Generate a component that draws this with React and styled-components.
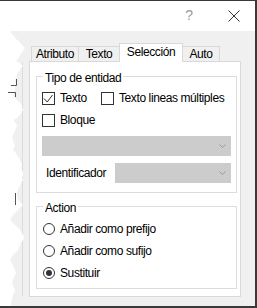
import React from 'react';
import styled, { createGlobalStyle } from 'styled-components';

const GlobalStyle = createGlobalStyle`
  html, body {
    margin: 0;
    padding: 0;
    background: #fff;
  }
  body {
    font-family: "Liberation Sans", Arial, sans-serif;
    font-size: 12px;
    letter-spacing: -0.4px;
    color: #000;
  }
  * {
    box-sizing: border-box;
  }
`;

const Frame = styled.div`
  position: relative;
  width: 257px;
  height: 308px;
  display: flex;
  flex-direction: column;
  border-top: 1px solid #3a3a3a;
  border-right: 2px solid #3a3a3a;
  border-bottom: 2px solid #3a3a3a;
  background: #fff;
  overflow: hidden;
`;

const TitleBar = styled.div`
  height: 30px;
  flex-shrink: 0;
  display: flex;
  justify-content: flex-end;
  align-items: flex-start;
  gap: 35px;
  padding: 7px 15px 0 0;
  background: #fff;
`;

const Help = styled.span`
  font-size: 14px;
  line-height: 14px;
  color: #9a9a9a;
  letter-spacing: 0;
`;

const CloseIcon = styled.svg`
  margin-top: 2px;
`;

const Body = styled.div`
  flex: 1;
  background: #f0f0f0;
  padding: 12px 0 0 29px;
`;

const TabStrip = styled.div`
  display: flex;
  align-items: flex-end;
  height: 18px;
  padding-left: 2px;
`;

const Tab = styled.div`
  width: ${(p) => p.$w}px;
  height: ${(p) => (p.$active ? 19 : 15)}px;
  margin-left: -1px;
  margin-bottom: ${(p) => (p.$active ? -1 : 0)}px;
  padding-top: ${(p) => (p.$active ? 1 : 0)}px;
  border: 1px solid #d9d9d9;
  border-bottom: none;
  background: ${(p) => (p.$active ? '#fff' : '#f0f0f0')};
  position: relative;
  z-index: ${(p) => (p.$active ? 1 : 0)};
  text-align: center;
  line-height: 14px;
  white-space: nowrap;

  &:first-child {
    margin-left: 0;
  }
`;

const Panel = styled.div`
  width: 212px;
  height: 236px;
  border: 1px solid #d9d9d9;
  background: #fff;
  padding: 14px 0 0 6px;
`;

const GroupBox = styled.div`
  position: relative;
  width: 201px;
  height: ${(p) => p.$h}px;
  margin-bottom: 13px;
  border: 1px solid #dcdcdc;
  padding: 15px 0 0 ${(p) => p.$pl}px;
  display: flex;
  flex-direction: column;
  gap: ${(p) => p.$gap}px;
`;

const Legend = styled.span`
  position: absolute;
  top: -6px;
  left: 6px;
  padding: 0 2px;
  background: #fff;
  line-height: 14px;
`;

const CheckGrid = styled.div`
  display: grid;
  grid-template-columns: 59px auto;
  align-items: center;
  height: 13px;
`;

const CheckItem = styled.label`
  display: flex;
  align-items: center;
  gap: 5px;
  line-height: 13px;
  white-space: nowrap;
`;

const Box = styled.span`
  width: 13px;
  height: 13px;
  flex-shrink: 0;
  border: 1px solid #333;
  background: #fff;
  display: flex;
`;

const Combo = styled.div`
  width: ${(p) => p.$w}px;
  height: 20px;
  background: #cccccc;
  border: 1px solid #cccccc;
  display: flex;
  justify-content: flex-end;
  align-items: center;
  padding-right: 4px;
`;

const IdRow = styled.div`
  width: 189px;
  height: 20px;
  margin-top: -2px;
  display: flex;
  align-items: center;
  justify-content: space-between;
  padding-left: 4px;
`;

const RadioItem = styled.label`
  display: flex;
  align-items: center;
  gap: 5px;
  height: 14px;
  line-height: 14px;
  white-space: nowrap;
`;

const Radio = styled.span`
  width: 12px;
  height: 12px;
  flex-shrink: 0;
  border: 1px solid #333;
  border-radius: 50%;
  background: #fff;
  display: flex;
  align-items: center;
  justify-content: center;
`;

const Dot = styled.span`
  width: 6px;
  height: 6px;
  border-radius: 50%;
  background: #333;
`;

const TornEdge = styled.svg`
  position: absolute;
  left: 0;
  top: -1px;
  pointer-events: none;
`;

const tornPoints =
  '0,0 18,0 18,2 12,31 10,32 12,34 14,36 16,39 19,41 21,44 23,46 25,48 23,51 21,54 19,57 17,60 15,60 18,62 21,64 23,66 21,68 20,70 18,72 17,75 16,78 15,80 16,84 15,87 15,90 14,93 13,95 15,98 17,100 19,102 22,105 22,108 23,110 21,113 20,115 17,118 13,120 15,122 17,125 16,128 15,130 14,133 13,135 12,138 13,140 14,143 15,145 14,148 13,150 15,152 17,155 19,158 20,160 21,163 22,165 21,168 22,170 23,173 23,175 22,178 23,180 21,183 20,185 19,188 18,190 17,193 17,195 18,198 18,200 21,203 23,205 20,208 18,210 15,213 13,215 11,218 10,220 12,222 15,225 18,228 20,230 22,233 23,235 24,238 23,240 21,243 20,245 19,248 18,250 15,253 13,255 11,258 10,260 12,263 13,265 14,268 15,270 16,273 15,275 14,278 13,280 12,283 13,285 14,288 15,290 14,293 13,295 12,298 12,300 11,303 11,305 11,308 0,308';

const Chevron = () => (
  <svg width="7" height="4" viewBox="0 0 7 4">
    <polyline points="0.5,0.5 3.5,3.5 6.5,0.5" fill="none" stroke="#9a9a9a" strokeWidth="1" />
  </svg>
);

const Check = ({ checked, children }) => (
  <CheckItem>
    <Box>
      {checked && (
        <svg width="11" height="11" viewBox="0 0 11 11">
          <polyline points="1,5.5 4.2,9 9.5,2" fill="none" stroke="#333" strokeWidth="1" />
        </svg>
      )}
    </Box>
    {children}
  </CheckItem>
);

const Option = ({ checked, children }) => (
  <RadioItem>
    <Radio>{checked && <Dot />}</Radio>
    {children}
  </RadioItem>
);

const tabs = [
  { label: 'Atributo', w: 48 },
  { label: 'Texto', w: 42 },
  { label: 'Selección', w: 64, active: true },
  { label: 'Auto', w: 38 },
];

const App = () => {
  return (
    <>
      <GlobalStyle />
      <Frame>
        <TitleBar>
          <Help>?</Help>
          <CloseIcon width="12" height="12" viewBox="0 0 12 12">
            <path d="M0.5 0.5 L11.5 11.5 M11.5 0.5 L0.5 11.5" stroke="#333" strokeWidth="1" />
          </CloseIcon>
        </TitleBar>
        <Body>
          <TabStrip>
            {tabs.map((t) => (
              <Tab key={t.label} $w={t.w} $active={t.active}>
                {t.label}
              </Tab>
            ))}
          </TabStrip>
          <Panel>
            <GroupBox $h={117} $pl={5} $gap={9}>
              <Legend>Tipo de entidad</Legend>
              <CheckGrid>
                <Check checked>Texto</Check>
                <Check>Texto lineas múltiples</Check>
              </CheckGrid>
              <CheckGrid>
                <Check>Bloque</Check>
              </CheckGrid>
              <Combo $w={189}>
                <Chevron />
              </Combo>
              <IdRow>
                <span>Identificador</span>
                <Combo $w={116}>
                  <Chevron />
                </Combo>
              </IdRow>
            </GroupBox>
            <GroupBox $h={83} $pl={6} $gap={8}>
              <Legend>Action</Legend>
              <Option>Añadir como prefijo</Option>
              <Option>Añadir como sufijo</Option>
              <Option checked>Sustituir</Option>
            </GroupBox>
          </Panel>
        </Body>
        <TornEdge width="30" height="308" viewBox="0 0 30 308">
          <line x1="22.5" y1="62" x2="22.5" y2="296" stroke="#dcdcdc" strokeWidth="1" />
          <polygon points={tornPoints} fill="#fff" />
          <path d="M11 85.5 H16.5 V79 M8 92.5 H15.5 V97 M15.5 193 V205" fill="none" stroke="#555" strokeWidth="1" />
        </TornEdge>
      </Frame>
    </>
  );
};

export default App;
